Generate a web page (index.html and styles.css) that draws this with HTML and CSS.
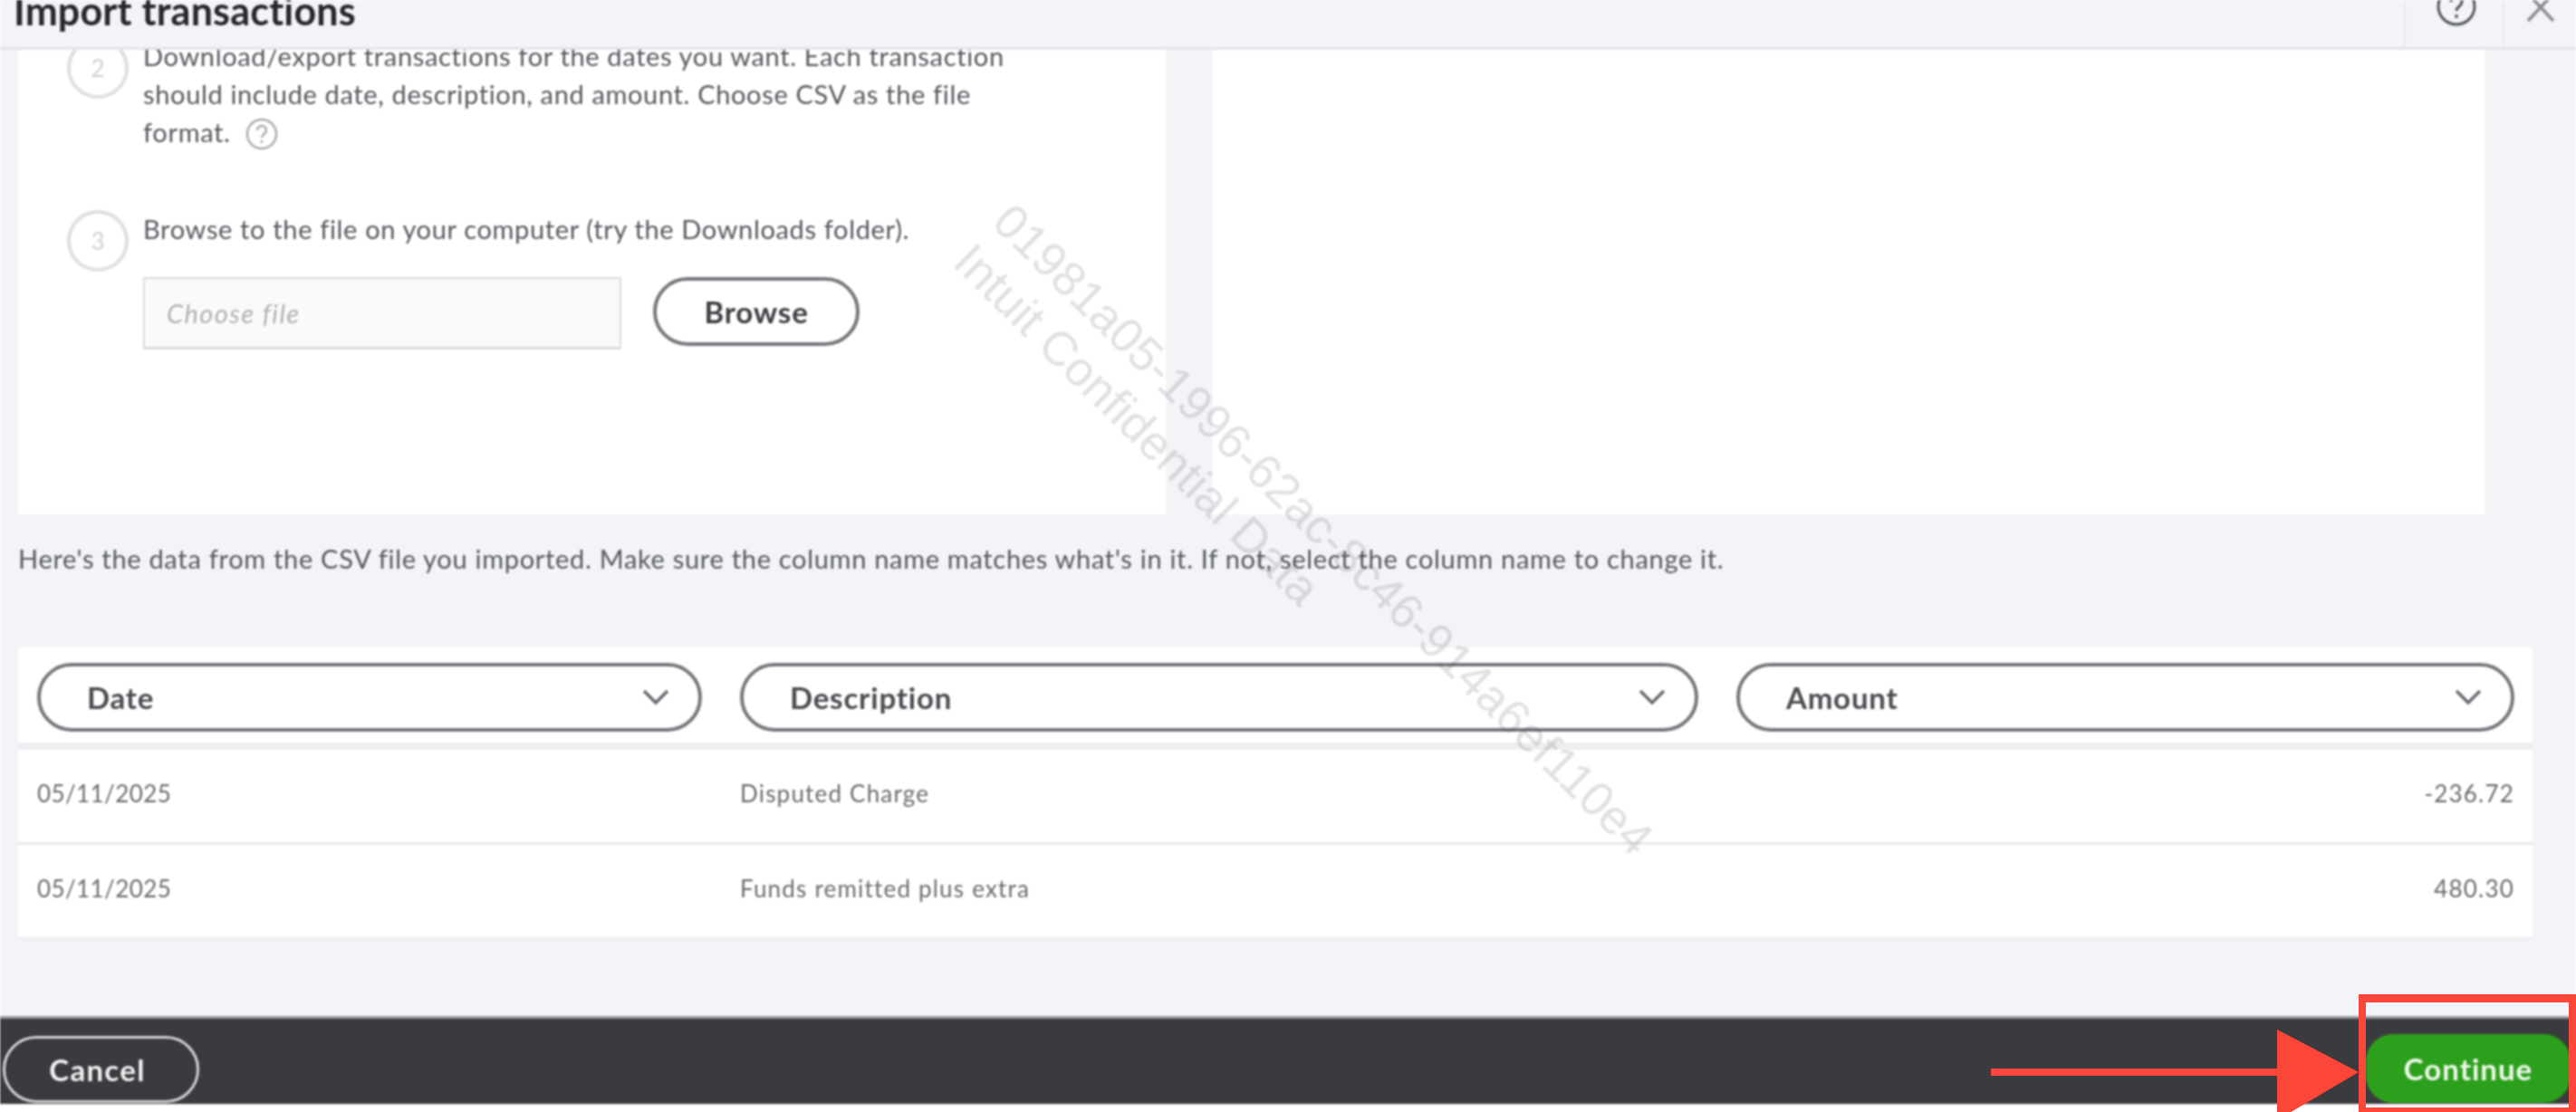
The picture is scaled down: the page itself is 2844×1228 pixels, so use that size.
FILE: index.html
```html
<!DOCTYPE html>
<html lang="en">
<head>
  <meta charset="UTF-8" />
  <meta name="viewport" content="width=device-width, initial-scale=1.0"/>
  <title>Import transactions</title>
  <link rel="stylesheet" href="styles.css">
</head>
<body>

  <div class="page">
    <header class="top-bar">
      <h1>Import transactions</h1>
      <div class="top-actions">
        <div class="top-cell help-cell">
          <svg class="top-icon" width="44" height="44" viewBox="0 0 44 44" fill="none" stroke="#55585e" stroke-width="3">
            <circle cx="22" cy="22" r="20"/>
            <path d="M16 17c0-4 3-6 6-6s6 2 6 6c0 5-6 5-6 10"/>
            <path d="M22 31v4"/>
          </svg>
        </div>
        <div class="top-cell close-cell">
          <svg class="top-icon" width="32" height="44" viewBox="0 0 32 44" fill="none" stroke="#8b8d91" stroke-width="3.5">
            <path d="M2 8l28 30M30 8L2 38"/>
          </svg>
        </div>
      </div>
    </header>

    <div class="cards">
      <div class="card steps">
        <div class="step">
          <span class="step-num">2</span>
          <div class="step-body">
            <p>Download/export transactions for the dates you want. Each transaction should include date, description, and amount. Choose CSV as the file format.
              <svg class="hint" width="36" height="36" viewBox="0 0 36 36" fill="none" stroke="#a9adb3" stroke-width="2.5">
                <circle cx="18" cy="18" r="16"/>
                <path d="M13 14c0-3 2-5 5-5s5 2 5 5c0 4-5 4-5 8"/>
                <path d="M18 25v3"/>
              </svg>
            </p>
          </div>
        </div>
        <div class="step">
          <span class="step-num">3</span>
          <div class="step-body">
            <p>Browse to the file on your computer (try the Downloads folder).</p>
            <div class="file-row">
              <div class="file-input">Choose file</div>
              <button class="browse-btn">Browse</button>
            </div>
          </div>
        </div>
      </div>
      <div class="card side"></div>
    </div>

    <p class="note">Here's the data from the CSV file you imported. Make sure the column name matches what's in it. If not, select the column name to change it.</p>

    <div class="card table">
      <div class="table-row table-head">
        <div class="col-select">Date
          <svg width="30" height="18" viewBox="0 0 30 18" fill="none" stroke="#6b6c72" stroke-width="3.5"><path d="M2 2l13 13L28 2"/></svg>
        </div>
        <div class="col-select">Description
          <svg width="30" height="18" viewBox="0 0 30 18" fill="none" stroke="#6b6c72" stroke-width="3.5"><path d="M2 2l13 13L28 2"/></svg>
        </div>
        <div class="col-select">Amount
          <svg width="30" height="18" viewBox="0 0 30 18" fill="none" stroke="#6b6c72" stroke-width="3.5"><path d="M2 2l13 13L28 2"/></svg>
        </div>
      </div>
      <div class="table-row table-data">
        <span class="date">05/11/2025</span>
        <span>Disputed Charge</span>
        <span class="amount">-236.72</span>
      </div>
      <div class="table-row table-data last">
        <span class="date">05/11/2025</span>
        <span>Funds remitted plus extra</span>
        <span class="amount">480.30</span>
      </div>
    </div>

    <footer class="bottom-bar">
      <button class="cancel-btn">Cancel</button>
      <button class="continue-btn">Continue</button>
    </footer>

    <div class="watermark">
      <div class="wm-line">01981a05-1996-62ac-8c46-914a6ef110e4</div>
      <div class="wm-line wm-second">Intuit Confidential Data</div>
    </div>
  </div>

  <!-- annotation on top of the screenshot -->
  <div class="red-box"></div>
  <svg class="red-arrow" width="410" height="100" viewBox="0 0 410 100">
    <rect x="0" y="43" width="320" height="8" fill="#fc4639"/>
    <polygon points="316,0 406,47 316,100" fill="#fc4639"/>
  </svg>

</body>
</html>
```

FILE: styles.css
```css
* {
  box-sizing: border-box;
}

html, body {
  margin: 0;
  height: 1228px;
  overflow: hidden;
  background: #ffffff;
}

body {
  position: relative;
  font-family: Lato, "Open Sans", sans-serif;
  color: #55585e;
}

.page {
  position: relative;
  height: 1228px;
  overflow: hidden;
  background: linear-gradient(#f3f4f8 1220px, #ffffff 1220px);
  filter: blur(0.9px);
}

/* top bar */
.top-bar {
  position: relative;
  z-index: 2;
  display: flex;
  justify-content: space-between;
  height: 55px;
  overflow: hidden;
  background: #f3f4f8;
  border-bottom: 3px solid #e3e4e8;
}

h1 {
  margin: -10px 0 0 15px;
  font-size: 43px;
  letter-spacing: 0.2px;
  line-height: 44px;
  font-weight: 700;
  color: #26282c;
}

.top-actions {
  display: flex;
}

.top-cell {
  border-left: 2px solid #e9eaee;
}

.help-cell {
  width: 109px;
  padding-left: 34px;
}

.close-cell {
  width: 81px;
  padding-left: 24px;
}

.top-icon {
  display: block;
  margin-top: -15px;
}

/* upload steps */
.cards {
  display: flex;
  gap: 52px;
  height: 513px;
  margin: 0 101px 0 20px;
}

.card {
  background: #ffffff;
}

.steps {
  width: 1267px;
  margin-top: -14px;
  padding-left: 54px;
  display: flex;
  flex-direction: column;
  gap: 65px;
}

.side {
  flex: 1;
}

.step {
  display: flex;
  gap: 16px;
}

.step-num {
  flex: none;
  display: flex;
  align-items: center;
  justify-content: center;
  width: 68px;
  height: 68px;
  border: 4px solid #dedfe1;
  border-radius: 50%;
  font-size: 26px;
  color: #cfd0d3;
}

.step-body {
  width: 960px;
}

.step-body p {
  margin: 0;
  font-size: 29px;
  letter-spacing: 0.65px;
  line-height: 42px;
}

.hint {
  vertical-align: -9px;
  margin-left: 8px;
}

.file-row {
  display: flex;
  gap: 35px;
  margin-top: 32px;
}

.file-input {
  width: 528px;
  height: 80px;
  padding-left: 24px;
  line-height: 76px;
  font-size: 29px;
  letter-spacing: 1.4px;
  font-style: italic;
  color: #aeb0b3;
  background: #fafafa;
  border: 2px solid #dcdcde;
  border-bottom-width: 3px;
}

button {
  font-family: inherit;
  font-weight: 700;
  cursor: pointer;
}

.browse-btn {
  width: 228px;
  height: 76px;
  font-size: 33px;
  letter-spacing: 0.8px;
  color: #3d3f44;
  background: #ffffff;
  border: 4px solid #77787d;
  border-radius: 38px;
}

.note {
  margin: 28px 0 0 20px;
  font-size: 29px;
  letter-spacing: 0.7px;
  line-height: 42px;
}

/* column mapping table */
.table {
  margin: 77px 48px 0 20px;
}

.table-row {
  display: grid;
  grid-template-columns: 734px 1058px 1fr;
  column-gap: 42px;
  padding: 0 20px 0 21px;
}

.table-head {
  height: 113px;
  padding-top: 17px;
  border-bottom: 8px solid #eceef1;
}

.col-select {
  display: flex;
  align-items: center;
  justify-content: space-between;
  height: 76px;
  padding: 0 32px 0 51px;
  font-size: 33px;
  letter-spacing: 0.8px;
  font-weight: 700;
  color: #4a4c51;
  border: 4px solid #77787d;
  border-radius: 38px;
}

.table-data {
  align-items: center;
  height: 105px;
  padding-bottom: 6px;
  font-size: 26px;
  letter-spacing: 1.2px;
  color: #6a6c71;
  border-bottom: 3px solid #e6e7e9;
}

.table-data .date {
  letter-spacing: 0.4px;
}

.table-data.last {
  border-bottom-color: #eceef1;
}

.amount {
  text-align: right;
}

/* footer */
.bottom-bar {
  display: flex;
  justify-content: space-between;
  align-items: flex-end;
  height: 97px;
  margin-top: 84px;
  padding: 0 6px 1px 3px;
  background: #3a3b3f;
  border-top: 3px solid #9a9b9e;
}

.cancel-btn {
  width: 217px;
  height: 74px;
  padding: 0 8px 0 0;
  font-size: 33px;
  letter-spacing: 1.3px;
  color: #f1f1f1;
  background: transparent;
  border: 3px solid #d0d0d2;
  border-radius: 37px;
}

.continue-btn {
  width: 226px;
  height: 76px;
  font-size: 33px;
  letter-spacing: 1px;
  color: #f0f8ec;
  background: #2ca01c;
  border: none;
  border-radius: 30px;
}

/* diagonal watermark */
.watermark {
  position: absolute;
  left: 1128px;
  top: 213px;
  transform: rotate(44.6deg);
  transform-origin: 0 0;
  font-family: "Liberation Sans", Arial, sans-serif;
  font-size: 53px;
  letter-spacing: 0.2px;
  line-height: 62px;
  white-space: nowrap;
  color: rgba(60, 60, 70, 0.16);
  pointer-events: none;
}

.red-box {
  position: absolute;
  left: 2604px;
  top: 1098px;
  width: 240px;
  height: 130px;
  border: 8px solid #fc4639;
  border-top-width: 9px;
  border-bottom-width: 5px;
}

.red-arrow {
  position: absolute;
  left: 2198px;
  top: 1137px;
}
```
